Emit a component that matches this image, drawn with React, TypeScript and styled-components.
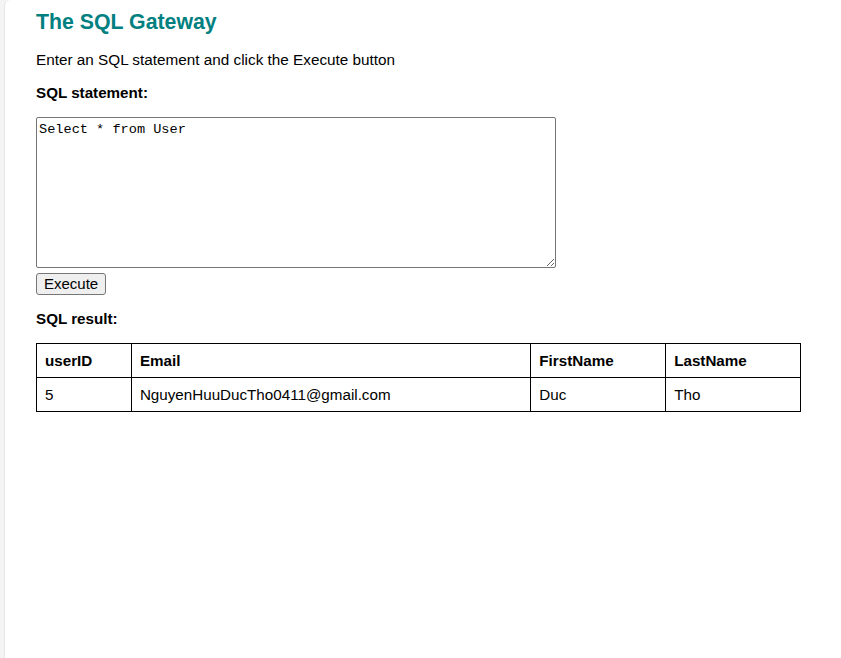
import React from "react";
import styled, { createGlobalStyle } from "styled-components";

const Global = createGlobalStyle`
  html, body { margin: 0; padding: 0; background: #f4f4f4; }
  body { font-family: "Liberation Sans", Arial, sans-serif; }
`;

const Page = styled.div`
  margin-left: 4px;
  min-height: 658px;
  background: #fff;
  border-left: 1px solid #e6e6e6;
  border-top-left-radius: 6px;
  padding: 10px 40px 20px 31px;
  box-sizing: border-box;
  color: #000;
`;

const Title = styled.h1`
  margin: 0 0 17px;
  font-size: 21.3px;
  line-height: 24px;
  color: #008080;
  font-weight: bold;
`;

const Intro = styled.p`
  margin: 0 0 15px;
  font-size: 15.3px;
  line-height: 18px;
`;

const Label = styled.p`
  margin: 0 0 15px;
  font-size: 15.2px;
  line-height: 18px;
  font-weight: bold;
`;

const Area = styled.textarea`
  display: block;
  box-sizing: border-box;
  width: 520px;
  height: 151px;
  border: 1px solid #767676;
  border-radius: 2px;
  padding: 3px 2px;
  font-family: "Liberation Mono", "DejaVu Sans Mono", monospace;
  font-size: 13.6px;
  line-height: 18px;
  resize: both;
  margin: 0;
`;

const Button = styled.button`
  display: block;
  margin: 5px 0 15px;
  height: 22px;
  padding: 0 7px;
  font-family: "Liberation Sans", Arial, sans-serif;
  font-size: 15px;
  line-height: 18px;
  background: #efefef;
  border: 1px solid #767676;
  border-radius: 3px;
  color: #000;
`;

const Table = styled.table`
  border-collapse: collapse;
  width: 765px;
  margin-top: 8px;
  font-size: 15.2px;
`;

const Th = styled.th<{ $w: number }>`
  width: ${(p) => p.$w}px;
  border: 1px solid #000;
  text-align: left;
  padding: 0 8px;
  height: 34px;
  box-sizing: border-box;
  font-weight: bold;
`;

const Td = styled.td`
  border: 1px solid #000;
  padding: 0 8px;
  height: 34px;
  box-sizing: border-box;
`;

export default function App() {
  return (
    <>
      <Global />
      <Page>
        <Title>The SQL Gateway</Title>
        <Intro>Enter an SQL statement and click the Execute button</Intro>
        <Label>SQL statement:</Label>
        <Area defaultValue="Select * from User" />
        <Button>Execute</Button>
        <Label>SQL result:</Label>
        <Table>
          <thead>
            <tr>
              <Th $w={95}>userID</Th>
              <Th $w={400}>Email</Th>
              <Th $w={135}>FirstName</Th>
              <Th $w={135}>LastName</Th>
            </tr>
          </thead>
          <tbody>
            <tr>
              <Td>5</Td>
              <Td>NguyenHuuDucTho0411@gmail.com</Td>
              <Td>Duc</Td>
              <Td>Tho</Td>
            </tr>
          </tbody>
        </Table>
      </Page>
    </>
  );
}
